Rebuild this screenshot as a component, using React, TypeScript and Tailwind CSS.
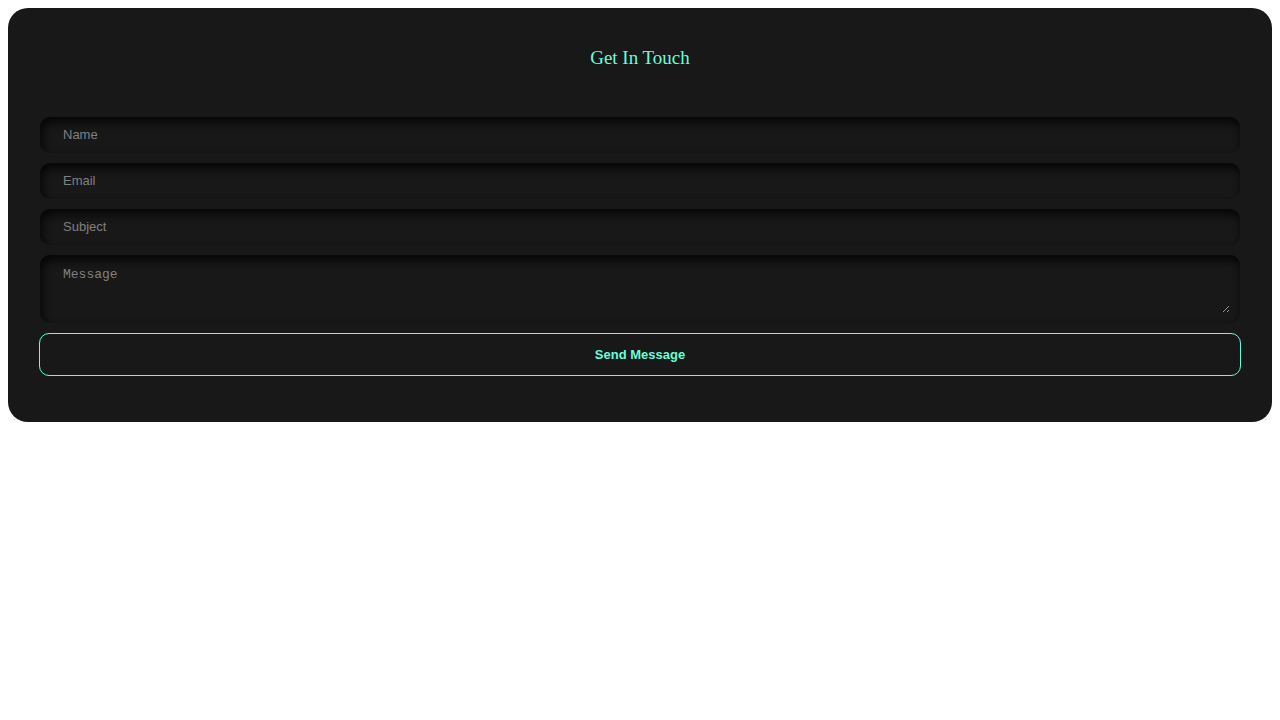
export default function App() {
  const field =
    "block w-full h-[36px] rounded-[10px] bg-[#181818] px-[23px] pb-px text-[13px] text-[#d3d3d3] placeholder:text-[#808080] outline-none border-none shadow-[inset_2px_5px_10px_rgb(5,5,5)]";

  return (
    <div className="p-2 bg-white min-h-[720px]">
      <div className="rounded-[20px] bg-[#181818] px-8 pt-[38px] pb-[46px]">
        {/* Header */}
        <h2
          className="text-center text-[19px] leading-[23px] text-[#64ffda]"
          style={{ fontFamily: '"Liberation Serif", serif' }}
        >
          Get In Touch
        </h2>

        {/* Form */}
        <form
          className="mt-[48px] flex flex-col gap-[10px]"
          style={{ fontFamily: '"Liberation Sans", Arial, sans-serif' }}
          onSubmit={(e) => e.preventDefault()}
        >
          <input type="text" placeholder="Name" className={field} />
          <input type="email" placeholder="Email" className={field} />
          <input type="text" placeholder="Subject" className={field} />
          <div className="rounded-[10px] bg-[#181818] p-[10px] shadow-[inset_2px_5px_10px_rgb(5,5,5)]">
            <textarea
              placeholder="Message"
              className="block w-full h-[48px] bg-transparent px-[13px] text-[13px] text-[#d3d3d3] placeholder:text-[#808080] outline-none border-none"
              style={{ fontFamily: '"Liberation Mono", monospace' }}
            />
          </div>
          <button
            type="submit"
            className="-mx-px h-[43px] rounded-[10px] border border-[#64ffda] bg-transparent text-[13px] font-bold text-[#64ffda]"
          >
            Send Message
          </button>
        </form>
      </div>
    </div>
  );
}
